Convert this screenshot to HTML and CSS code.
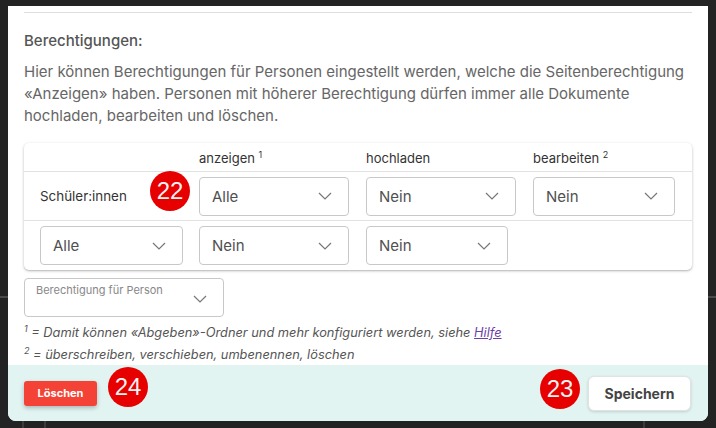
FILE: index.html
```html
<!DOCTYPE html>
<html lang="de">
<head>
<meta charset="utf-8">
<link rel="stylesheet" href="styles.css">
</head>
<body>
<div class="modal">
  <div class="content">
    <div class="divider"></div>
    <h3 class="heading">Berechtigungen:</h3>
    <p class="intro">Hier können Berechtigungen für Personen eingestellt werden, welche die Seitenberechtigung «Anzeigen» haben. Personen mit höherer Berechtigung dürfen immer alle Dokumente hochladen, bearbeiten und löschen.</p>

    <div class="card">
      <div class="row head">
        <div class="cell"></div>
        <div class="cell">anzeigen <sup>1</sup></div>
        <div class="cell">hochladen</div>
        <div class="cell">bearbeiten <sup>2</sup></div>
      </div>
      <div class="row">
        <div class="cell label">Schüler:innen</div>
        <div class="cell"><div class="select w150"><span>Alle</span><svg class="chev" viewBox="0 0 14 8"><polyline points="1,1 7,7 13,1"/></svg></div></div>
        <div class="cell"><div class="select w150"><span>Nein</span><svg class="chev" viewBox="0 0 14 8"><polyline points="1,1 7,7 13,1"/></svg></div></div>
        <div class="cell"><div class="select w142"><span>Nein</span><svg class="chev" viewBox="0 0 14 8"><polyline points="1,1 7,7 13,1"/></svg></div></div>
      </div>
      <div class="row last">
        <div class="cell"><div class="select w143"><span>Alle</span><svg class="chev" viewBox="0 0 14 8"><polyline points="1,1 7,7 13,1"/></svg></div></div>
        <div class="cell"><div class="select w150"><span>Nein</span><svg class="chev" viewBox="0 0 14 8"><polyline points="1,1 7,7 13,1"/></svg></div></div>
        <div class="cell"><div class="select w142"><span>Nein</span><svg class="chev" viewBox="0 0 14 8"><polyline points="1,1 7,7 13,1"/></svg></div></div>
        <div class="cell"></div>
      </div>
    </div>

    <div class="person-select">
      <span class="ps-label">Berechtigung für Person</span>
      <svg class="chev" viewBox="0 0 14 8"><polyline points="1,1 7,7 13,1"/></svg>
    </div>

    <div class="notes">
      <p><sup>1</sup> = Damit können «Abgeben»-Ordner und mehr konfiguriert werden, siehe <a href="#">Hilfe</a></p>
      <p><sup>2</sup> = überschreiben, verschieben, umbenennen, löschen</p>
    </div>
  </div>

  <div class="footer">
    <button class="btn-delete">Löschen</button>
    <button class="btn-save">Speichern</button>
  </div>

  <span class="badge b22">22</span>
  <span class="badge b23">23</span>
  <span class="badge b24">24</span>
</div>
</body>
</html>
```
FILE: styles.css
```css
* { box-sizing: border-box; }
html, body { margin: 0; padding: 0; }
body {
  width: 716px;
  height: 428px;
  overflow: hidden;
  background-color: #232323;
  background-image:
    linear-gradient(#4a4a4a, #4a4a4a),
    linear-gradient(#4a4a4a, #4a4a4a),
    linear-gradient(#3c3c3c, #3c3c3c),
    linear-gradient(#3c3c3c, #3c3c3c),
    linear-gradient(#3c3c3c, #3c3c3c);
  background-repeat: no-repeat;
  background-size: 8px 2px, 8px 2px, 2px 7px, 2px 7px, 2px 7px;
  background-position: 0 296px, 708px 296px, 22px 421px, 44px 421px, 643px 421px;
  font-family: Inter, "Noto Sans", sans-serif;
  color: #555;
}
.modal {
  position: relative;
  margin: 6px 0 0 8px;
  width: 700px;
  height: 415px;
  background: #fff;
  border-radius: 0 0 8px 8px;
  overflow: hidden;
  display: flex;
  flex-direction: column;
}
.content {
  height: 359px;
  overflow: hidden;
  padding: 0 16px;
}
.divider {
  margin-top: 6px;
  height: 1px;
  background: #dedede;
}
.heading {
  margin: 18px 0 0;
  font-size: 15px;
  line-height: 20px;
  font-weight: 500;
  color: #555;
}
.intro {
  margin: 10px 0 0;
  font-size: 15px;
  line-height: 22px;
  color: #666;
}
.card {
  margin-top: 16px;
  border-radius: 5px;
  box-shadow: 0 1px 3px rgba(0,0,0,0.25), 0 1px 1px rgba(0,0,0,0.08);
  background: #fff;
}
.row {
  display: grid;
  grid-template-columns: 159px 167px 167px 1fr;
  padding-left: 16px;
  align-items: center;
  height: 49px;
  border-bottom: 1px solid #e2e2e2;
}
.row.head {
  height: 29px;
  font-size: 13px;
  color: #333;
}
.row.last { border-bottom: none; }
.row.head .cell { padding-top: 1px; }
sup {
  font-size: 9px;
  vertical-align: 5px;
  line-height: 0;
}
.cell.label {
  font-size: 13.4px;
  color: #333;
}
.select {
  height: 39px;
  border: 1px solid #c8c8c8;
  border-radius: 4px;
  display: flex;
  align-items: center;
  justify-content: space-between;
  padding: 0 16px 0 12px;
  font-size: 15px;
  color: #505050;
}
.w150 { width: 150px; }
.w143 { width: 143px; }
.w142 { width: 142px; }
.chev {
  width: 14px;
  height: 8px;
  fill: none;
  stroke: #777;
  stroke-width: 1.2;
}
.person-select {
  margin-top: 8px;
  width: 200px;
  height: 39px;
  border: 1px solid #c8c8c8;
  border-radius: 4px;
  position: relative;
  padding: 4px 16px 0 11px;
}
.ps-label {
  display: block;
  font-size: 11px;
  line-height: 14px;
  color: #888;
}
.person-select .chev {
  position: absolute;
  right: 16px;
  top: 16px;
}
.notes {
  margin-top: 5px;
  font-size: 12.8px;
  font-style: italic;
  color: #555;
}
.notes p {
  margin: 0;
  line-height: 22px;
}
.notes a {
  color: #6f3fa8;
  text-decoration: underline;
}
.footer {
  height: 56px;
  background: #e1f4f2;
  display: flex;
  align-items: center;
  justify-content: space-between;
  padding: 0 17px 0 16px;
}
.btn-delete {
  width: 73px;
  height: 25px;
  border: none;
  border-radius: 3px;
  background: #f44336;
  color: #fff;
  font-family: Inter, "Noto Sans", sans-serif;
  font-weight: 700;
  font-size: 11px;
  box-shadow: 0 2px 4px rgba(0,0,0,0.25);
  padding: 0;
}
.btn-save {
  width: 103px;
  height: 35px;
  border: 1px solid #e2e2e2;
  border-radius: 6px;
  background: #fff;
  color: #444;
  font-family: Inter, "Noto Sans", sans-serif;
  font-weight: 700;
  font-size: 14px;
  box-shadow: 0 1px 3px rgba(0,0,0,0.15);
  padding: 0;
}
.badge {
  position: absolute;
  width: 40px;
  height: 40px;
  border-radius: 50%;
  background: #e60000;
  color: #f2f2f2;
  font-family: "Liberation Sans", Arial, sans-serif;
  font-size: 24px;
  line-height: 40px;
  text-align: center;
}
.b22 { left: 142px; top: 165px; }
.b23 { left: 532px; top: 363px; }
.b24 { left: 100px; top: 361px; }
```
